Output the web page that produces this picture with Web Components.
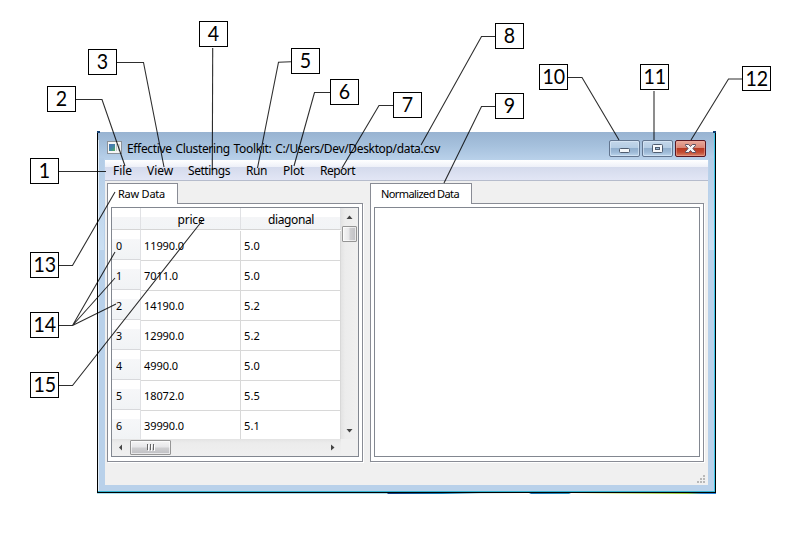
<!DOCTYPE html>
<html lang="en">
<head>
<meta charset="utf-8">
<title>Effective Clustering Toolkit</title>
<style>
html,body{margin:0;padding:0}
body{width:790px;height:535px;background:#fff;position:relative;overflow:hidden;font-family:"Noto Sans","Open Sans",sans-serif;font-size:12px;color:#000}
app-window{position:absolute;left:97px;top:132px}
callout-lines{position:absolute;left:0;top:0}
callout-box{position:absolute}
</style>
</head>
<body>
<app-window heading="Effective Clustering Toolkit: C:/Users/Dev/Desktop/data.csv">
  <menu-bar slot="menu"></menu-bar>
  <tab-pane label="Raw Data" labelwidth="47" style="--tab:71px;width:256px">
    <data-grid></data-grid>
  </tab-pane>
  <tab-pane label="Normalized Data" labelwidth="78" style="--tab:102px;width:334px"></tab-pane>
</app-window>
<callout-lines></callout-lines>
<script>
const define = (name, html, setup) => customElements.define(name, class extends HTMLElement {
  connectedCallback() {
    if (this.shadowRoot) return;
    const root = this.attachShadow({mode: 'open'});
    root.innerHTML = '<style>:host,*{box-sizing:border-box}' + (typeof html === 'function' ? html(this) : html);
    if (setup) setup(this, root);
  }
});

// A single line of text whose tracking is adjusted to the requested width.
define('fit-text', `:host{display:inline-block;white-space:nowrap;line-height:16px}</style><span><slot></slot></span>`, (host, root) => {
  const span = root.querySelector('span');
  const w = +host.getAttribute('w');
  const n = host.textContent.length;
  if (w) {
    host.style.letterSpacing = ((w - span.getBoundingClientRect().width) / n).toFixed(3) + 'px';
    host.style.width = w + 'px';
  }
});

define('window-button', h => {
  const k = h.getAttribute('kind');
  const icon = {
    min: '<rect x="10.5" y="8.5" width="10" height="4" rx="1" fill="#f4f7fa" stroke="#4f5d70"/>',
    max: '<rect x="10.5" y="4.5" width="10" height="8" rx="1" fill="#f6f8fb" stroke="#4f5d70"/><rect x="13.5" y="7.5" width="4" height="2" fill="#9db9d6" stroke="#4f5d70"/>',
    close: '<path d="M10.5 4.5h3.2l1.8 2 1.8-2h3.2v1l-2.6 3 2.6 3v1h-3.2l-1.8-2-1.8 2h-3.2v-1l2.6-3-2.6-3z" fill="#f6f6f8" stroke="#5b5060"/>'
  }[k];
  return `:host{display:block;width:31px;height:17px;border:1px solid ${k=='close'?'#591722':'#62758f'};border-radius:2px;
    background:${k=='close'?'linear-gradient(#e9a99b,#d98676 46%,#b93a23 50%,#c24b33 75%,#d98468)':'linear-gradient(#c4d7ea,#b4cce4 46%,#91afce 50%,#9ebad7 75%,#bcd5ec)'};
    box-shadow:inset 0 0 0 1px ${k=='close'?'#eda99a90':'#dcebf8a0'}}
    svg{display:block;margin:-1px}</style><svg width="31" height="17">${icon}</svg>`;
});

define('menu-bar', () => {
  const items = [['File',19,15],['View',26,15],['Settings',42,16],['Run',21,16],['Plot',21,16],['Report',35,0]];
  return `:host{display:flex;height:21px;padding:3px 0 0 8px;border-bottom:1px solid #b6bccc;background:linear-gradient(#fff 0,#edf0f8 7px,#d4daec 7px,#e2e6f5 100%)}</style>` +
    items.map(([t,w,m]) => `<fit-text w="${w}" style="margin-right:${m}px">${t}</fit-text>`).join('');
});

define('app-window', h => `
  :host{display:block;width:619px;height:361px;border:1px solid #000;border-top:0;position:relative;
    background:linear-gradient(#98b3d1 0,#a6c1dd 14px,#b9d1ea 28px,#b9d1ea 60px,#b9d1ea)}
  .side{position:absolute;top:26px;width:5px;height:92px;background:linear-gradient(#b3cce6,#cbdff2)}
  header{display:flex;height:28px;padding:0 9px 0 9px;align-items:flex-start}
  .ico{width:15px;height:13px;margin-top:9px;display:block}
  .title{margin:9px auto 0 5px;word-spacing:1px}
  .btns{display:flex;gap:2px;margin-top:8px}
  .body{margin:0 7px 0 7px;height:325px;background:#f0f0f0;display:flex;flex-direction:column}
  .panes{display:flex;gap:7px;padding:2px 0 0 2px;height:281px}
  footer{display:flex;flex:1;justify-content:flex-end;align-items:flex-end;padding:0 3px 2px 0}
  .glow{position:absolute;inset:0 0 0 auto;width:1px;background:#3ec7e8}
  .glowl{position:absolute;inset:8px auto 0 0;width:1px;background:#e3eef8}
  .glowb{position:absolute;inset:auto 0 0 0;height:1px;background:#35b4d0}
  .corner{position:absolute;top:-1px;width:3px;height:2px;background:#123e70}
  .desk{position:absolute;left:-1px;right:-1px;bottom:-2px;height:1px;background:linear-gradient(90deg,#a5e2f2,#a5dcec 290px,#123d86 291px,#147fb8 345px,#d4eef4 383px,#fff 432px,#1b74b4 434px,#2b96c4 472px,#fff 474px,#e6f4c8 500px,#93cc3c 590px,#358cd0 604px,#2284e0)}
  </style>
  <div class="side" style="left:1px"></div><div class="side" style="right:1px"></div>
  <header>
    <svg class="ico" viewBox="0 0 15 13"><rect x=".5" y=".5" width="14" height="12" fill="#f5f5f5" stroke="#8b9299"/><path d="M2 3h6v7H2z" fill="#438c9a"/><path d="M2 3h6L2 9z" fill="#487baf"/><path d="M5 10l3-4v4z" fill="#52a36d"/><path d="M9.500 3v7" stroke="#c5cbd0"/><path d="M11 3h2v7h-2z" fill="#d2d6d7"/></svg>
    <fit-text class="title" w="313">${h.getAttribute('heading')}</fit-text>
    <div class="btns"><window-button kind="min"></window-button><window-button kind="max"></window-button><window-button kind="close"></window-button></div>
  </header>
  <div class="body"><slot name="menu"></slot><div class="panes"><slot></slot></div>
  <footer><svg width="8" height="8"><g fill="#b8b8b8"><path d="M6 0h2v2H6zM3 3h2v2H3zM6 3h2v2H6zM0 6h2v2H0zM3 6h2v2H3zM6 6h2v2H6z"/></g></svg></footer></div>
  <i class="glow"></i><i class="glowl"></i><i class="glowb"></i><i class="corner" style="left:-1px"></i><i class="corner" style="right:-1px"></i><i class="desk"></i>`);

define('tab-pane', h => `
  :host{display:flex;flex-direction:column;height:279px;font-size:11px}
  .tab{width:var(--tab);height:21px;border:1px solid #898c95;border-bottom:0;background:#fff;padding:2px 0 0 10px;margin-bottom:-1px;position:relative}
  .frame{flex:1;border:1px solid #898c95;background:#fff;padding:3px 3px 4px;box-shadow:1px 1px #fff}
  .inner{height:100%;border:1px solid #828790;background:#fff;overflow:hidden}</style>
  <div class="tab"><fit-text w="${h.getAttribute('labelwidth')}">${h.getAttribute('label')}</fit-text></div>
  <div class="frame"><div class="inner"><slot></slot></div></div>`);

define('scroll-bar', h => {
  const v = h.hasAttribute('vertical');
  return `:host{display:flex;flex-direction:${v?'column':'row'};background:linear-gradient(${v?'90deg':'180deg'},#e3e3e3,#ececec 4px,#f0f0f0)}
  .a{width:17px;height:17px;flex:none}.sp{flex:1}
  .t{${v?'width:15px;height:16px;margin:1px':'width:41px;height:15px;margin:1px'};flex:none;border:1px solid #959595;border-radius:1px;background:linear-gradient(${v?'90deg':'180deg'},#f5f5f5,#e6e6e8 48%,#cfcfd1 52%,#c0c0c4);box-shadow:inset 0 0 0 1px #ffffffa0;display:flex;align-items:center;justify-content:center}</style>
  <svg class="a"><path d="${v?'M5.500 11l3-3.500 3 3.500z':'M10 5.500v6L7 8.500z'}" fill="#444"/></svg>
  <div class="t">${v?'':'<svg width="8" height="7"><path d="M.5 0v6M3.500 0v6M6.500 0v6" stroke="#666"/><path d="M1.500 1v6M4.500 1v6M7.500 1v6" stroke="#fff"/></svg>'}</div>
  <div class="sp"></div>
  <svg class="a"><path d="${v?'M5.500 7l3 3.500 3-3.500z':'M7 5.500v6l3.500-3z'}" fill="#444"/></svg>`;
});

define('data-grid', () => {
  const rows = [['11990.0','5.0'],['7011.0','5.0'],['14190.0','5.2'],['12990.0','5.2'],['4990.0','5.0'],['18072.0','5.5'],['39990.0','5.1']];
  return `:host{display:grid;grid-template:231px 17px / 229px 17px;height:248px}
  .t{overflow:hidden}
  .h,.r{display:grid;grid-template-columns:29px 100px 100px}
  .h{height:22px;margin-bottom:1px;text-align:center;font-size:12px}
  .h>*{border-right:1px solid #e0e1e4;border-bottom:1px solid #d5d5d5;background:linear-gradient(#fff 9px,#f4f5f7 9px,#f2f4f6);padding:3px 0 0 1px}
  .r{height:30px}
  .n{margin:-1px 0 1px;border-right:1px solid #e0e1e4;border-bottom:1px solid #d8d9dc;background:linear-gradient(#fff 9px,#f6f7f9 9px,#f1f3f5);padding:8px 0 0 4px;font-size:11.500px}
  .n fit-text{transform:scaleX(.93);transform-origin:0 0}
  .c{border-right:1px solid #d8d8d8;border-bottom:1px solid #d8d8d8;padding:7px 0 0 3px;color:#000}
  .k{background:#f0f0f0}</style>
  <div class="t"><div class="h"><div></div><div><fit-text w="27">price</fit-text></div><div><fit-text w="46">diagonal</fit-text></div></div>
  ${rows.map(([a,b],i)=>`<div class="r"><div class="n"><fit-text w="7">${i}</fit-text></div><div class="c"><fit-text w="${a.length==7?40:34}">${a}</fit-text></div><div class="c"><fit-text w="16">${b}</fit-text></div></div>`).join('')}</div>
  <scroll-bar vertical></scroll-bar><scroll-bar></scroll-bar><div class="k"></div>`;
});

define('callout-box', `:host{display:flex;width:29px;height:26px;border:1px solid #000;background:#fff;align-items:center;justify-content:center;font:22px/24px Lato,sans-serif}
  span{transform:scaleX(.89);margin-top:-2px}</style><span><slot></slot></span>`);

define('callout-lines', () => `:host{display:block;width:790px;height:535px}</style>
  <svg width="790" height="535" fill="none" stroke="#000" stroke-opacity=".82" stroke-width="1.1">
  ${['59 171.500H106','76 99.500H102L125 166','117 62.500H143.500L164 167','212.700 48L212.300 170','291 61.700L278.500 62.200 257.500 168','330 92.500H314.500L294 166','393 105.500H379L342 168','495 36.500H481.500L421 145','495 106.500H481.500L444 183','568 77.500H582L619 140','654 91V140','742 79H728.500L691 140','59 265.500H72.500L115 192','59 325.500H72.500L115 252M72.500 325.500L115 278M72.500 325.500L116 304','59 385.500H72.500L202 221'].map(d=>`<path d="M${d}"/>`).join('')}</svg>`);

const boxes = [[30,158],[47,86],[88,49],[199,21],[291,48],[330,79],[393,92],[495,23],[495,93],[539,64],[640,64],[742,66],[30,252],[30,312],[30,372]];
boxes.forEach(([x, y], i) => {
  const box = document.createElement('callout-box');
  box.textContent = i + 1;
  box.style.left = x + 'px';
  box.style.top = y + 'px';
  if (i === 11) box.style.height = '25px';
  document.body.append(box);
});
</script>
</body>
</html>
